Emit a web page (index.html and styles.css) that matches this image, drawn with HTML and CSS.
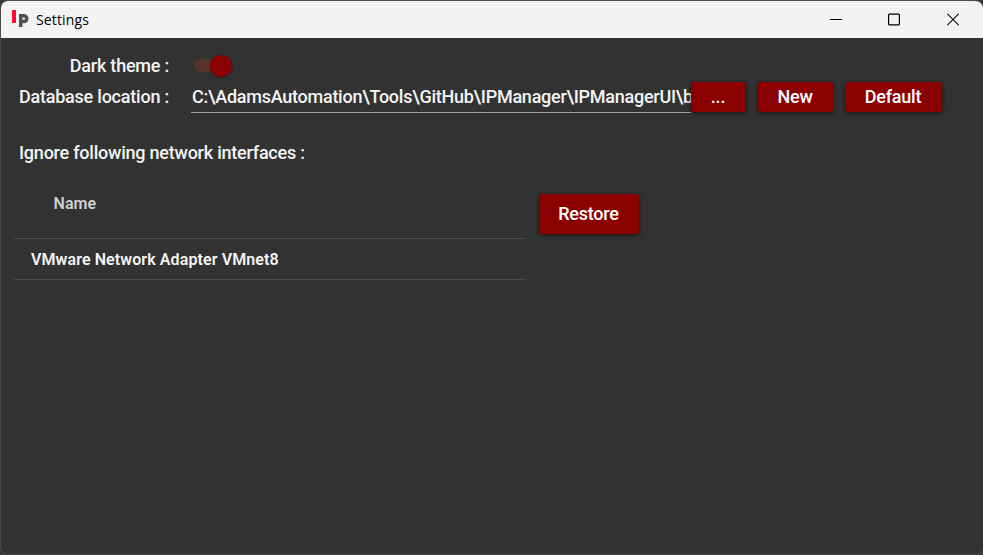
FILE: index.html
```html
<!DOCTYPE html>
<html lang="en">
<head>
<meta charset="utf-8">
<title>Settings</title>
<link rel="stylesheet" href="styles.css">
</head>
<body>
<div class="window">
  <header class="titlebar">
    <svg class="logo" width="18" height="18" viewBox="0 0 18 18">
      <rect x="1" y="0" width="4" height="13" fill="#ff0a2b"/>
      <path fill="none" stroke="#505050" stroke-width="3.5" d="M9.7 17V5.7h3.2a2.8 2.8 0 0 1 0 5.8H9.7"/>
    </svg>
    <h1 class="title">Settings</h1>
    <div class="controls">
      <svg width="12" height="13" viewBox="0 0 12 13"><path d="M0 6.5h12"/></svg>
      <svg width="12" height="13" viewBox="0 0 12 13"><rect x=".6" y="1.1" width="10.8" height="10.8" rx="1"/></svg>
      <svg width="12" height="13" viewBox="0 0 12 13"><path d="M.3 .8l11.4 11.4M11.7 .8L.3 12.2"/></svg>
    </div>
  </header>
  <main class="content">
    <div class="row theme-row">
      <span class="label">Dark theme :</span>
      <span class="toggle"><span class="thumb"></span></span>
    </div>
    <div class="row path-row">
      <span class="label">Database location :</span>
      <div class="path">C:\AdamsAutomation\Tools\GitHub\IPManager\IPManagerUI\b</div>
      <button class="btn browse">...</button>
      <button class="btn new">New</button>
      <button class="btn default">Default</button>
    </div>
    <h2 class="heading">Ignore following network interfaces :</h2>
    <div class="interfaces">
      <div class="table">
        <div class="th">Name</div>
        <div class="td">VMware Network Adapter VMnet8</div>
      </div>
      <button class="btn restore">Restore</button>
    </div>
  </main>
</div>
</body>
</html>
```
FILE: styles.css
```css
* { box-sizing: border-box; }
body {
  margin: 0;
  height: 555px;
  overflow: hidden;
  background: #39383a;
  font-family: Roboto, sans-serif;
}
.window {
  height: 555px;
  border: 1px solid #4a4849;
  border-right: 0;
  border-radius: 8px;
  overflow: hidden;
  background: #323232;
  color: #f4f4f4;
}
.titlebar {
  height: 37px;
  display: flex;
  align-items: center;
  padding: 0 24px 0 10px;
  background: #f3f3f3;
  color: #000;
}
.logo { margin-top: -1px; }
.title {
  margin: -1px 0 0 7px;
  font: 400 14px "Open Sans", sans-serif;
  letter-spacing: 0.15px;
}
.controls {
  margin-left: auto;
  display: flex;
  gap: 46.5px;
}
.controls svg { fill: none; stroke: #000; stroke-width: 1.2; }
.controls svg:nth-child(2) { margin: 0 1px 0 -1px; }
.content { padding: 12px 0 0 13px; }
.row {
  display: flex;
  align-items: center;
  height: 31px;
  font-size: 18px;
  font-weight: 500;
  letter-spacing: -0.22px;
}
.label {
  width: 155px;
  text-align: right;
  white-space: nowrap;
}
.toggle {
  display: flex;
  align-items: center;
  justify-content: flex-end;
  width: 38px;
  height: 13px;
  margin: 0 0 0 25px;
  border-radius: 7px;
  background: #57332e;
}
.thumb {
  flex: none;
  width: 22px;
  height: 22px;
  border-radius: 50%;
  background: #8b0000;
  box-shadow: 0 1px 3px rgba(0, 0, 0, .4);
}
.path {
  width: 500px;
  height: 32px;
  margin: 1px 0 0 22px;
  padding-left: 1px;
  border-bottom: 1px solid #a3a3a3;
  line-height: 31px;
  letter-spacing: -0.255px;
  white-space: nowrap;
  overflow: hidden;
}
.btn {
  height: 31px;
  padding: 0 0 2px;
  border: 0;
  border-radius: 3px;
  background: #8b0000;
  color: #fff;
  font: 500 18px Roboto, sans-serif;
  letter-spacing: -0.22px;
  box-shadow: 0 1px 4px rgba(0, 0, 0, .65);
}
.path-row .btn { margin-top: 1px; height: 30px; }
.path-row .browse { width: 55px; margin-left: -0.5px; }
.path-row .new { width: 75px; margin-left: 12px; }
.path-row .default { width: 97px; margin-left: 12px; }
.heading {
  margin: 30px 0 0 5px;
  font-size: 18px;
  font-weight: 500;
  line-height: 22px;
  letter-spacing: -0.23px;
}
.interfaces {
  display: flex;
  align-items: flex-start;
  margin-top: 30px;
}
.table {
  width: 512px;
  font-size: 16px;
  font-weight: 600;
  letter-spacing: .1px;
}
.th {
  height: 45px;
  padding-left: 39.5px;
  border-bottom: 1px solid #4a4a4a;
  line-height: 20px;
  color: #cfcfcf;
}
.td {
  height: 41px;
  padding-left: 17px;
  border-bottom: 1px solid #4a4a4a;
  line-height: 42px;
}
.restore { width: 100px; height: 40px; margin-left: 12.5px; }
```
